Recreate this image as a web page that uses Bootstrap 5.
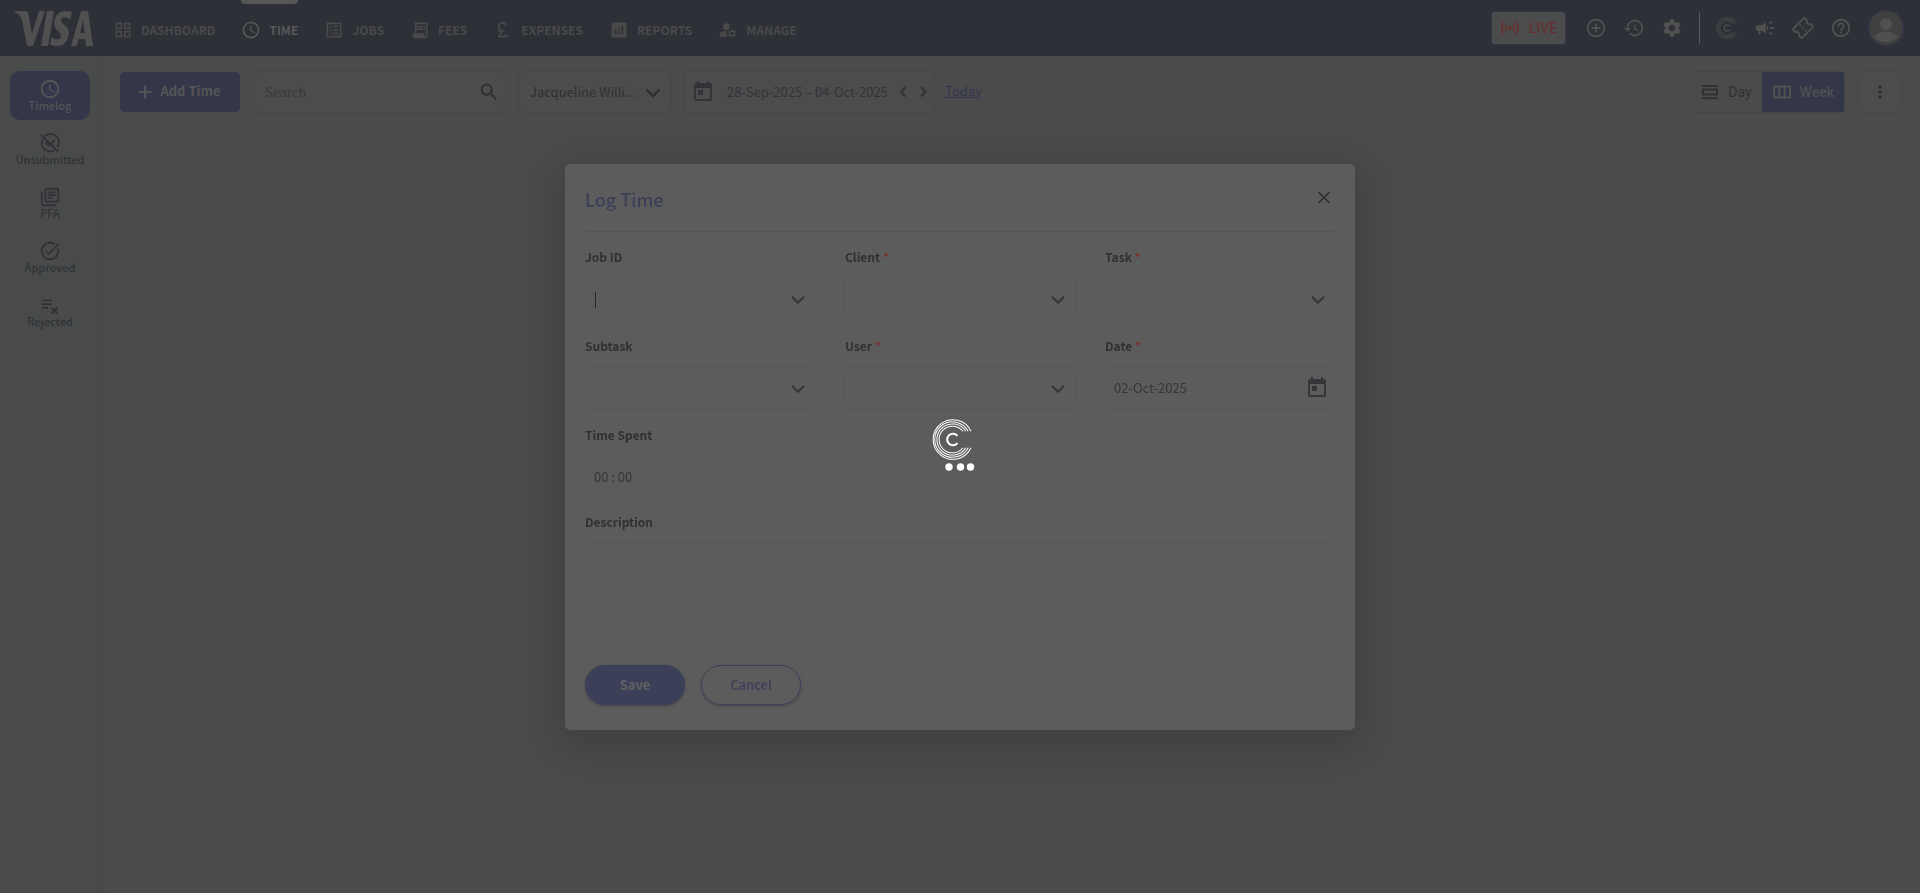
<!DOCTYPE html>
<html lang="en">
<head>
<meta charset="utf-8">
<meta name="viewport" content="width=device-width, initial-scale=1">
<title>Log Time</title>
<link href="https://cdn.jsdelivr.net/npm/bootstrap@5.3.0/dist/css/bootstrap.min.css" rel="stylesheet">
<style>
  :root { --page:#4b4b4b; --bar:#2e3037; --side:#494b4a; --brand:#343649; --brand-modal:#3c3f58; --sheet:#5c5c5c; --ink:#2e2f33; --dim:#505050; }
  body { font-family:"Noto Sans CJK SC","Open Sans",sans-serif; font-size:13px; line-height:20px; background:var(--page); color:var(--ink); min-height:100vh; }
  svg { display:block; fill:currentColor; flex:none; }
  .i18 { width:18px; height:18px; } .i20 { width:20px; height:20px; } .i22 { width:22px; height:22px; } .i24 { width:24px; height:24px; }
  button { color:inherit; }
  .plain { background:none; border:0; padding:0; }
  /* top bar */
  .topbar { background:var(--bar); height:56px; color:var(--dim); padding:0 16px 0 15px; }
  .brandmark { width:78px; height:35px; margin-right:20px; }
  .menu { gap:26px; }
  .menu a { color:#494949; text-decoration:none; font-size:12px; font-weight:700; height:56px; padding-top:4px; position:relative; gap:8px; }
  .menu a.current { color:#575757; }
  .menu a.current::before { content:""; position:absolute; top:0; left:0; right:0; height:4px; background:#575757; border-radius:0 0 4px 4px; }
  .live { width:75px; height:34px; margin-right:3px; background:#4c4c4c; color:#6b2c2c; border:1px solid #34364b; border-radius:4px; font:400 14px/20px Roboto,sans-serif; gap:9px; }
  .tools { gap:16px; }
  .rule { width:1px; height:32px; background:#585858; }
  .avatar { width:36px; height:36px; }
  /* side bar */
  .side { width:102px; background:var(--side); padding:15px 10px; gap:5px; box-shadow:0 0 6px rgba(0,0,0,.06); min-height:calc(100vh - 56px); border-top-right-radius:10px; flex:none; }
  .side a { color:#303238; text-decoration:none; width:80px; height:49px; border-radius:10px; font-size:11px; line-height:11px; font-weight:500; padding-top:7px; }
  .side a.current { background:var(--brand); color:#555; }
  /* tool row */
  .toolrow { padding:15px 20px 15px 18px; gap:15px; }
  .box { height:40px; border-radius:5px; background:#4c4c4c; box-shadow:0 0 4px 1px rgba(0,0,0,.05); }
  .box input, .box select, .field input, .field select { background:transparent; border:0; outline:0; appearance:none; min-width:0; color:inherit; padding:0; }
  .add { width:120px; height:40px; background:var(--brand); color:#555; border:0; border-radius:5px; font-weight:700; gap:5px; padding:0 4px 2px 0; }
  .searchbox { width:250px; padding:0 5px 0 10px; }
  .searchbox input::placeholder { color:#3a3a3a; opacity:1; }
  .person { width:150px; padding:0 5px 0 10px; }
  .range { width:250px; padding:0 2px 0 6px; color:#323338; }
  .range input { width:160px; margin-left:12px; }
  .today { color:#343650; margin-left:-5px; font-size:13px; padding-bottom:2px; }
  .views { height:42px; border:1px solid #454545; border-radius:4px; font:400 14px/20px Roboto,sans-serif; overflow:hidden; }
  .views button { border:0; background:none; gap:9px; padding:0 10px; color:#303030; }
  .views button.on { background:var(--brand); color:#505050; font-weight:500; padding-left:11px; }
  .more { width:40px; }
  /* dialog */
  .shade .modal-dialog { max-width:790px; }
  .shade .modal-content { background:var(--sheet); border:0; border-radius:5px; padding:20px 20px 25px; color:#303030; box-shadow:0 11px 45px 10px rgba(0,0,0,.15); }
  .head { height:48px; border-bottom:1px solid #555; margin-bottom:15px; padding:0 2px 0 0; }
  .head h1 { font-size:18px; line-height:20px; font-weight:500; color:var(--brand-modal); margin:5px 0 0; }
  .formgrid { display:grid; grid-template-columns:repeat(3,1fr); gap:17px 30px; margin-bottom:15px; }
  .lbl { display:block; font-size:12px; font-weight:700; margin-bottom:12px; line-height:20px; }
  .lbl span { color:#7c3030; }
  .field { height:40px; border-radius:5px; box-shadow:0 0 3px 1px rgba(0,0,0,.05); padding:0 6px 0 9px; position:relative; color:#34363a; }
  .field.caret::before { content:""; position:absolute; left:10px; top:13px; width:1px; height:16px; background:#262626; }
  .field textarea { background:transparent; border:0; outline:0; resize:none; height:105px; }
  .pill { width:100px; height:40px; border-radius:20px; font-weight:500; font-size:13px; border:1px solid var(--brand-modal); box-shadow:0 1px 3px rgba(0,0,0,.25); }
  .pill.go { background:var(--brand-modal); color:#626262; font-weight:700; }
  .pill.no { background:none; color:var(--brand-modal); }
  .busy { position:fixed; inset:0; z-index:2000; pointer-events:none; }
  .busy svg { width:60px; height:60px; }
</style>
</head>
<body>
<svg width="0" height="0" class="position-absolute" aria-hidden="true">
  <symbol id="chev" viewBox="0 0 24 24"><path d="M5.500 9.500l6.500 6.500 6.500-6.500" fill="none" stroke="currentColor" stroke-width="2.400"/></symbol>
  <symbol id="clock" viewBox="0 0 24 24"><path d="M11.990 2C6.470 2 2 6.480 2 12s4.470 10 9.990 10C17.520 22 22 17.520 22 12S17.520 2 11.990 2zM12 20c-4.420 0-8-3.580-8-8s3.580-8 8-8 8 3.580 8 8-3.580 8-8 8zm.5-13H11v6l5.250 3.150.75-1.230-4.500-2.670z"/></symbol>
  <symbol id="cal" viewBox="0 0 24 24"><path d="M19 3h-1V1h-2v2H8V1H6v2H5c-1.110 0-1.990.9-1.990 2L3 19c0 1.100.89 2 2 2h14c1.100 0 2-.9 2-2V5c0-1.100-.9-2-2-2zm0 16H5V8h14v11zM7 10h5v5H7z"/></symbol>
  <symbol id="rings" viewBox="0 0 40 40"><g fill="none" stroke="currentColor" stroke-width="1"><path d="M38 12A19.300 19.300 0 1 0 38 28"/><path d="M35.300 12A17.300 17.300 0 1 0 35.300 28"/><path d="M32.900 12A15.200 15.200 0 1 0 32.900 28"/><path d="M30.200 12A13 13 0 1 0 30.200 28"/><path d="M24.800 16.500A5.600 5.600 0 1 0 24.800 23.500" stroke-width="2"/></g></symbol>
</svg>

<header class="topbar d-flex align-items-center">
  <svg class="brandmark" viewBox="0 0 78 35" role="img" aria-label="Visa"><path d="M0 0H10Q13 0 13.500 3L17 23 24 0H30L18 35H12L7 9Q5 3 0 1.500ZM32 0H39L33 35H26ZM57 1L55.500 8Q46 4 46 9 46 11 49 13.500 55 18 53.500 25 51 35 42 35 38 35 35 33.500L36.500 26.500Q45 31 46 25.500 46.500 23 43 20 38 16 39.500 9 42 0 50 0 54 0 57 1ZM66 0H73L78 35H71L70.300 28H63.500L61.500 35H56ZM68 9L65 22H69.600Z"/></svg>
  <nav class="menu d-flex" aria-label="Main">
    <a href="#" class="d-flex align-items-center"><svg class="i20" viewBox="0 0 24 24"><path d="M3 3v8h8V3H3zm6 6H5V5h4v4zm-6 4v8h8v-8H3zm6 6H5v-4h4v4zm4-16v8h8V3h-8zm6 6h-4V5h4v4zm-6 4v8h8v-8h-8zm6 6h-4v-4h4v4z"/></svg>DASHBOARD</a>
    <a href="#" class="current d-flex align-items-center"><svg class="i20"><use href="#clock"/></svg>TIME</a>
    <a href="#" class="d-flex align-items-center"><svg class="i20" viewBox="0 0 24 24"><path d="M19 5v14H5V5h14m1.100-2H3.900c-.5 0-.9.4-.9.9v16.200c0 .4.4.9.9.9h16.200c.4 0 .9-.5.9-.9V3.900c0-.5-.5-.9-.9-.9zM11 7h6v2h-6V7zm0 4h6v2h-6v-2zm0 4h6v2h-6zM7 7h2v2H7zm0 4h2v2H7zm0 4h2v2H7z"/></svg>JOBS</a>
    <a href="#" class="d-flex align-items-center"><svg class="i20" viewBox="0 0 24 24"><path d="M19.500 3.500L18 2l-1.500 1.500L15 2l-1.500 1.500L12 2l-1.500 1.500L9 2 7.500 3.500 6 2v14H3v3c0 1.660 1.340 3 3 3h12c1.660 0 3-1.340 3-3V2l-1.500 1.500zM19 19c0 .55-.45 1-1 1s-1-.45-1-1v-3H8V5h11v14zM9 7h6v2H9zM16 7h2v2h-2zM9 10h6v2H9zM16 10h2v2h-2z"/></svg>FEES</a>
    <a href="#" class="d-flex align-items-center"><svg class="i20" viewBox="0 0 24 24"><path d="M14 21c1.930 0 3.620-1.170 4-3l-1.750-.88C16 18.210 15.330 19 14 19H9.100c.83-1 1.500-2.340 1.500-4 0-.35-.03-.69-.08-1H14v-2H9.820C9 10.420 8 9.600 8 8c0-1.930 1.570-3.500 3.500-3.500 1.500 0 2.790.95 3.280 2.280L16.630 6c-.8-2.050-2.790-3.500-5.130-3.500C8.460 2.500 6 4.960 6 8c0 1.780.79 2.900 1.490 4H6v2h2.470c.08.31.13.64.13 1 0 2.700-2.600 4-2.600 4v2h8z"/></svg>EXPENSES</a>
    <a href="#" class="d-flex align-items-center"><svg class="i20" viewBox="0 0 24 24"><path d="M19 3H5c-1.100 0-2 .9-2 2v14c0 1.100.9 2 2 2h14c1.100 0 2-.9 2-2V5c0-1.100-.9-2-2-2zM9 17H7v-5h2v5zm4 0h-2v-3h2v3zm0-5h-2v-2h2v2zm4 5h-2V7h2v10z"/></svg>REPORTS</a>
    <a href="#" class="d-flex align-items-center"><svg class="i20" viewBox="0 0 24 24"><circle cx="10" cy="8" r="4"/><path d="M10.670 13.020C10.450 13.010 10.230 13 10 13c-2.420 0-4.680.67-6.610 1.820-.88.52-1.390 1.500-1.390 2.530V20h9.260c-.79-1.130-1.260-2.510-1.260-4 0-1.070.25-2.070.67-2.980zM20.750 16c0-.22-.03-.42-.06-.63l1.140-1.010-1-1.730-1.450.49c-.32-.27-.68-.48-1.080-.63L18 11h-2l-.3 1.490c-.4.15-.76.36-1.080.63l-1.450-.49-1 1.730 1.140 1.010c-.03.21-.06.41-.06.63s.03.42.06.63l-1.140 1.010 1 1.730 1.450-.49c.32.27.68.48 1.080.63L16 21h2l.3-1.490c.4-.15.76-.36 1.080-.63l1.450.49 1-1.730-1.140-1.010c.03-.21.06-.41.06-.63zM17 18c-1.100 0-2-.9-2-2s.9-2 2-2 2 .9 2 2-.9 2-2 2z"/></svg>MANAGE</a>
  </nav>
  <div class="tools d-flex align-items-center ms-auto">
    <button class="live d-flex align-items-center justify-content-center p-0" type="button"><svg class="i20" viewBox="0 0 20 20"><circle cx="10" cy="10" r="1.800"/><path d="M7 6.500a5 5 0 0 0 0 7M13 6.500a5 5 0 0 1 0 7M4 4.500Q-.5 10 4 15.500M16 4.500Q20.500 10 16 15.500" fill="none" stroke="currentColor" stroke-width="1.600"/></svg>LIVE</button>
    <button class="plain" type="button" aria-label="Add"><svg class="i22" viewBox="0 0 24 24"><path d="M13 7h-2v4H7v2h4v4h2v-4h4v-2h-4V7zm-1-5C6.480 2 2 6.480 2 12s4.480 10 10 10 10-4.480 10-10S17.520 2 12 2zm0 18c-4.410 0-8-3.590-8-8s3.590-8 8-8 8 3.590 8 8-3.590 8-8 8z"/></svg></button>
    <button class="plain" type="button" aria-label="History"><svg class="i22" viewBox="0 0 24 24"><path d="M13 3c-4.970 0-9 4.030-9 9H1l3.890 3.890.07.14L9 12H6c0-3.870 3.130-7 7-7s7 3.130 7 7-3.130 7-7 7c-1.930 0-3.680-.79-4.940-2.060l-1.420 1.420C8.270 19.990 10.510 21 13 21c4.970 0 9-4.030 9-9s-4.030-9-9-9zm-1 5v5l4.280 2.540.72-1.210-3.500-2.080V8H12z"/></svg></button>
    <button class="plain" type="button" aria-label="Settings"><svg class="i22" viewBox="0 0 24 24"><path d="M19.140 12.940c.04-.3.06-.61.06-.94 0-.32-.02-.64-.07-.94l2.030-1.580c.18-.14.23-.41.12-.61l-1.920-3.320c-.12-.22-.37-.29-.59-.22l-2.390.96c-.5-.38-1.030-.7-1.620-.94l-.36-2.540c-.04-.24-.24-.41-.48-.41h-3.840c-.24 0-.43.17-.47.41l-.36 2.540c-.59.24-1.130.57-1.620.94l-2.390-.96c-.22-.08-.47 0-.59.22L2.740 8.870c-.12.21-.08.47.12.61l2.030 1.580c-.05.3-.09.63-.09.94s.02.64.07.94l-2.030 1.580c-.18.14-.23.41-.12.61l1.920 3.320c.12.22.37.29.59.22l2.390-.96c.5.38 1.030.7 1.620.94l.36 2.540c.05.24.24.41.48.41h3.840c.24 0 .44-.17.47-.41l.36-2.540c.59-.24 1.130-.56 1.620-.94l2.390.96c.22.08.47 0 .59-.22l1.920-3.320c.12-.22.07-.47-.12-.61l-2.010-1.580zM12 15.600c-1.980 0-3.600-1.620-3.600-3.600s1.620-3.600 3.600-3.600 3.600 1.620 3.600 3.600-1.620 3.600-3.600 3.600z"/></svg></button>
    <span class="rule"></span>
    <button class="plain" type="button" aria-label="Company"><svg class="i22"><use href="#rings"/></svg></button>
    <button class="plain" type="button" aria-label="Announcements"><svg class="i22" viewBox="0 0 24 24"><path d="M18 11v2h4v-2h-4zm-2 6.610c.96.71 2.210 1.650 3.200 2.390.4-.53.8-1.070 1.200-1.600-.99-.74-2.240-1.680-3.200-2.400-.4.54-.8 1.080-1.200 1.610zM20.400 5.600c-.4-.53-.8-1.070-1.200-1.600-.99.74-2.240 1.680-3.200 2.400.4.53.8 1.070 1.200 1.600.96-.72 2.210-1.650 3.200-2.400zM4 9c-1.100 0-2 .9-2 2v2c0 1.100.9 2 2 2h1v4h2v-4h1l5 3V6L8 9H4zm11.500 3c0-1.330-.58-2.530-1.500-3.350v6.690c.92-.81 1.500-2.010 1.500-3.340z"/></svg></button>
    <button class="plain" type="button" aria-label="Tickets"><svg class="i22" viewBox="0 0 24 24"><path transform="rotate(-45 12 12)" d="M22 10V6c0-1.110-.9-2-2-2H4c-1.100 0-1.990.89-1.990 2v4c1.100 0 1.990.9 1.990 2s-.89 2-2 2v4c0 1.100.9 2 2 2h16c1.100 0 2-.9 2-2v-4c-1.100 0-2-.9-2-2s.9-2 2-2zm-2-1.460c-1.190.69-2 1.990-2 3.460s.81 2.770 2 3.460V18H4v-2.540c1.190-.69 2-1.990 2-3.460 0-1.480-.8-2.770-1.990-3.460L4 6h16v2.540zM11 15h2v2h-2zm0-4h2v2h-2zm0-4h2v2h-2z"/></svg></button>
    <button class="plain" type="button" aria-label="Help"><svg class="i22" viewBox="0 0 24 24"><path d="M11 18h2v-2h-2v2zm1-16C6.480 2 2 6.480 2 12s4.480 10 10 10 10-4.480 10-10S17.520 2 12 2zm0 18c-4.410 0-8-3.590-8-8s3.590-8 8-8 8 3.590 8 8-3.590 8-8 8zm0-14c-2.210 0-4 1.790-4 4h2c0-1.100.9-2 2-2s2 .9 2 2c0 2-3 1.750-3 5h2c0-2.250 3-2.500 3-5 0-2.210-1.790-4-4-4z"/></svg></button>
    <button class="plain" type="button" aria-label="Account"><svg class="avatar" viewBox="0 0 36 36"><circle cx="18" cy="18" r="17.500" fill="#404040" stroke="#33354b"/><circle cx="18" cy="14" r="6" fill="#505050"/><path d="M6 27Q18 16 30 27Q25 32 18 32T6 27Z" fill="#505050"/></svg></button>
  </div>
</header>

<div class="d-flex">
  <nav class="side d-flex flex-column" aria-label="Time">
    <a href="#" class="current d-flex flex-column align-items-center"><svg class="i22"><use href="#clock"/></svg>Timelog</a>
    <a href="#" class="d-flex flex-column align-items-center"><svg class="i22" viewBox="0 0 24 24"><path d="M6.500 4.700A9 9 0 0 1 20 16.500M17.500 19.200A9 9 0 0 1 4.500 7M2.500 3L21 21.500M7 11.500L11 15.500M13.500 12.500L17.500 8.500M8 9.500L14 15.500" fill="none" stroke="currentColor" stroke-width="2"/></svg>Unsubmitted</a>
    <a href="#" class="d-flex flex-column align-items-center"><svg class="i22" viewBox="0 0 24 24"><path d="M4 6H2v14c0 1.100.9 2 2 2h14v-2H4V6zm16-4H8c-1.100 0-2 .9-2 2v12c0 1.100.9 2 2 2h12c1.100 0 2-.9 2-2V4c0-1.100-.9-2-2-2zm0 14H8V4h12v12zM10 9h8v2h-8zm0 3h4v2h-4zm0-6h8v2h-8z"/></svg>PFA</a>
    <a href="#" class="d-flex flex-column align-items-center"><svg class="i22" viewBox="0 0 24 24"><path d="M22 5.180L10.590 16.600l-4.240-4.240 1.410-1.410 2.830 2.830 10-10L22 5.180zM19.790 10.220C19.920 10.790 20 11.390 20 12c0 4.420-3.580 8-8 8s-8-3.580-8-8 3.580-8 8-8c1.580 0 3.040.46 4.280 1.250l1.440-1.440C16.100 2.670 14.130 2 12 2 6.480 2 2 6.480 2 12s4.480 10 10 10 10-4.480 10-10c0-1.190-.22-2.330-.6-3.390l-1.610 1.610z"/></svg>Approved</a>
    <a href="#" class="d-flex flex-column align-items-center"><svg class="i22" viewBox="0 0 24 24"><path d="M14 10H3v2h11v-2zm0-4H3v2h11V6zM3 16h7v-2H3v2zm11.410 6L17 19.410 19.590 22 21 20.590 18.410 18 21 15.410 19.590 14 17 16.590 14.410 14 13 15.410 15.590 18 13 20.590 14.410 22z"/></svg>Rejected</a>
  </nav>

  <main class="flex-grow-1">
    <div class="toolrow d-flex align-items-center">
      <button class="add d-flex align-items-center justify-content-center" type="button"><svg class="i20" viewBox="0 0 20 20"><path d="M10 4.500v13M3.500 11h13" stroke="currentColor" stroke-width="2"/></svg>Add Time</button>
      <div class="box searchbox d-flex align-items-center"><input class="flex-grow-1" type="text" placeholder="Search" aria-label="Search"><svg class="i22" viewBox="0 0 24 24"><path d="M15.500 14h-.79l-.28-.27C15.410 12.590 16 11.110 16 9.500 16 5.910 13.090 3 9.500 3S3 5.910 3 9.500 5.910 16 9.500 16c1.610 0 3.090-.59 4.230-1.570l.27.28v.79l5 4.990L20.490 19l-4.990-5zm-6 0C7.010 14 5 11.990 5 9.500S7.010 5 9.500 5 14 7.010 14 9.500 11.990 14 9.500 14z"/></svg></div>
      <div class="box person d-flex align-items-center"><select class="flex-grow-1" aria-label="Person"><option>Jacqueline Willi...</option></select><svg class="i24"><use href="#chev"/></svg></div>
      <div class="box range d-flex align-items-center"><svg class="i24"><use href="#cal"/></svg><input type="text" value="28-Sep-2025 – 04-Oct-2025" aria-label="Date range">
        <button class="plain ms-auto" type="button" aria-label="Previous week"><svg class="i20" viewBox="0 0 20 20"><path d="M12.500 5L8 9.800l4.500 4.700" fill="none" stroke="currentColor" stroke-width="2"/></svg></button>
        <button class="plain" type="button" aria-label="Next week"><svg class="i20" viewBox="0 0 20 20"><path d="M8 5l4.500 4.800L8 14.500" fill="none" stroke="currentColor" stroke-width="2"/></svg></button></div>
      <a href="#" class="today">Today</a>
      <div class="views d-flex ms-auto" role="group" aria-label="View">
        <button class="d-flex align-items-center" type="button"><svg class="i18" viewBox="0 0 18 18"><path d="M1 3h16M1 15.200h16M2 6.500h14v5H2z" fill="none" stroke="currentColor" stroke-width="2"/></svg>Day</button>
        <button class="on d-flex align-items-center" type="button"><svg class="i18" viewBox="0 0 18 18"><path d="M1 3.500h16v11H1zM6.300 3v12M11.700 3v12" fill="none" stroke="currentColor" stroke-width="2"/></svg>Week</button>
      </div>
      <button class="box more plain d-flex align-items-center justify-content-center" type="button" aria-label="More"><svg class="i20" viewBox="0 0 20 20"><circle cx="10" cy="5" r="1.800"/><circle cx="10" cy="10" r="1.800"/><circle cx="10" cy="15" r="1.800"/></svg></button>
    </div>
  </main>
</div>

<div class="modal shade d-block" role="dialog" aria-labelledby="dlgTitle">
  <div class="modal-dialog modal-dialog-centered">
    <form class="modal-content">
      <div class="head d-flex justify-content-between align-items-start">
        <h1 id="dlgTitle">Log Time</h1>
        <button class="plain mt-1" type="button" aria-label="Close"><svg class="i18" viewBox="0 0 18 18"><path d="M3.500 4l11 11M14.500 4l-11 11" stroke="currentColor" stroke-width="1.700"/></svg></button>
      </div>
      <div class="formgrid">
        <div><label class="lbl" for="job">Job ID</label><div class="field caret d-flex align-items-center"><input id="job" class="flex-grow-1" type="text"><svg class="i22"><use href="#chev"/></svg></div></div>
        <div><label class="lbl" for="client">Client <span>*</span></label><div class="field d-flex align-items-center"><input id="client" class="flex-grow-1" type="text"><svg class="i22"><use href="#chev"/></svg></div></div>
        <div><label class="lbl" for="task">Task <span>*</span></label><div class="field d-flex align-items-center"><select id="task" class="flex-grow-1"><option></option></select><svg class="i22"><use href="#chev"/></svg></div></div>
        <div><label class="lbl" for="subtask">Subtask</label><div class="field d-flex align-items-center"><input id="subtask" class="flex-grow-1" type="text"><svg class="i22"><use href="#chev"/></svg></div></div>
        <div><label class="lbl" for="user">User <span>*</span></label><div class="field d-flex align-items-center"><input id="user" class="flex-grow-1" type="text"><svg class="i22"><use href="#chev"/></svg></div></div>
        <div><label class="lbl" for="date">Date <span>*</span></label><div class="field d-flex align-items-center"><input id="date" class="flex-grow-1" type="text" value="02-Oct-2025"><svg class="i24"><use href="#cal"/></svg></div></div>
        <div><label class="lbl" for="spent">Time Spent</label><div class="field d-flex align-items-center"><input id="spent" class="flex-grow-1" type="text" value="00 : 00"></div></div>
      </div>
      <label class="lbl" for="desc">Description</label>
      <div class="field h-auto p-0"><textarea id="desc" class="d-block w-100 p-2"></textarea></div>
      <div class="d-flex gap-3 pt-3">
        <button class="pill go" type="button">Save</button>
        <button class="pill no" type="button">Cancel</button>
      </div>
    </form>
  </div>
</div>

<div class="busy d-flex align-items-center justify-content-center text-white" role="status" aria-label="Loading">
  <svg viewBox="0 0 60 60"><use href="#rings" x="2" y="2" width="41" height="41"/><circle cx="19" cy="50" r="3.700"/><circle cx="30.500" cy="50" r="3.700"/><circle cx="40.500" cy="50" r="3.700"/></svg>
</div>
<script src="https://cdn.jsdelivr.net/npm/bootstrap@5.3.0/dist/js/bootstrap.bundle.min.js"></script>
</body>
</html>
